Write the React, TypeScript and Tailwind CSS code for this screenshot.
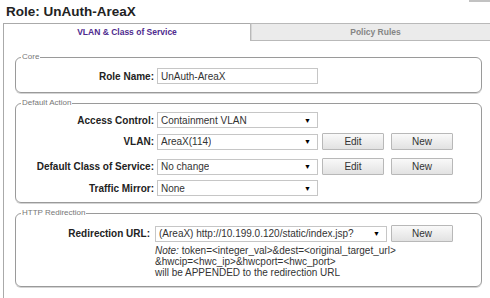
import type { ReactNode } from "react";

function Select({ value, width }: { value: string; width: string }) {
  return (
    <div
      className={`${width} flex h-[16px] items-center justify-between border border-[#c6c6c6] bg-white pl-[3px] pr-[6px] text-[10px] text-[#333]`}
    >
      <span className="truncate">{value}</span>
      <span className="text-[7px] leading-none text-black">▼</span>
    </div>
  );
}

function Button({ children }: { children: ReactNode }) {
  return (
    <button className="flex h-[17px] w-[62px] items-center justify-center rounded-[1px] border border-[#b8b8b8] bg-gradient-to-b from-[#f9f9f9] to-[#e2e2e2] text-[10px] text-[#333]">
      {children}
    </button>
  );
}

function Label({ children, width = "w-[138px]" }: { children: ReactNode; width?: string }) {
  return <div className={`${width} shrink-0 text-right text-[10px] font-bold text-[#222]`}>{children}</div>;
}

function Group({ title, className, children }: { title: string; className: string; children: ReactNode }) {
  return (
    <fieldset className={`w-[467px] rounded-[6px] border border-[#9a9a9a] shadow-[0_1px_0_#d4d4d4] ${className}`}>
      <legend className="ml-[5px] px-[1px] text-[8px] leading-[10px] text-[#777]">{title}</legend>
      {children}
    </fieldset>
  );
}

export default function App() {
  return (
    <div className="h-[298px] w-[490px] overflow-hidden bg-white font-['Liberation_Sans',Arial,sans-serif]">
      {/* Title */}
      <div className="flex h-[23px] items-start">
        <h1 className="pl-[6px] pt-[5px] text-[13.5px] font-bold leading-none text-[#222]">Role: UnAuth-AreaX</h1>
        <div className="ml-auto h-[2px] w-[21px] bg-[#c2c2c2]" />
      </div>

      <div className="ml-[3px] w-[498px]">
        {/* Tabs */}
        <div className="flex h-[18px]">
          <div className="flex w-[247px] items-center justify-center border-l border-t border-[#aaa] bg-white text-[8.5px] font-bold text-[#4e2a8e]">
            VLAN &amp; Class of Service
          </div>
          <div className="flex flex-1 items-center justify-center border border-[#b9b9b9] bg-[#ebebeb] text-[8.5px] font-bold text-[#858585] shadow-[inset_1px_0_0_#d6d6d6]">
            Policy Rules
          </div>
        </div>

        {/* Panel */}
        <div className="flex h-[260px] flex-col gap-[5px] border-l border-[#aaa] pl-[11px] pt-[11px]">
          <Group title="Core" className="pb-[8px] pt-[6px]">
            <div className="flex h-[16px] items-center gap-[3px]">
              <Label>Role Name:</Label>
              <div className="flex h-[16px] w-[161px] items-center border border-[#c6c6c6] pl-[3px] text-[10px] text-[#333]">
                UnAuth-AreaX
              </div>
            </div>
          </Group>

          <Group title="Default Action" className="pb-[6px] pt-[4px]">
            <div className="flex h-[16px] items-center gap-[3px]">
              <Label>Access Control:</Label>
              <Select value="Containment VLAN" width="w-[161px]" />
            </div>
            <div className="mt-[5px] flex h-[17px] items-center gap-[3px]">
              <Label>VLAN:</Label>
              <Select value="AreaX(114)" width="w-[161px]" />
              <div className="ml-[1px] flex gap-[7px]">
                <Button>Edit</Button>
                <Button>New</Button>
              </div>
            </div>
            <div className="mt-[8px] flex h-[17px] items-center gap-[3px]">
              <Label>Default Class of Service:</Label>
              <Select value="No change" width="w-[161px]" />
              <div className="ml-[1px] flex gap-[7px]">
                <Button>Edit</Button>
                <Button>New</Button>
              </div>
            </div>
            <div className="mt-[5px] flex h-[16px] items-center gap-[3px]">
              <Label>Traffic Mirror:</Label>
              <Select value="None" width="w-[161px]" />
            </div>
          </Group>

          <Group title="HTTP Redirection" className="pb-[8px] pt-[7px]">
            <div className="flex h-[17px] items-center gap-[5px]">
              <Label width="w-[134px]">Redirection URL:</Label>
              <Select value="(AreaX) http://10.199.0.120/static/index.jsp?" width="w-[232px]" />
              <div className="-ml-[1px]">
                <Button>New</Button>
              </div>
            </div>
            <p className="ml-[139px] mt-[3px] text-[10px] leading-[11px] text-[#333]">
              <i>Note:</i> token=&lt;integer_val&gt;&amp;dest=&lt;original_target_url&gt;
              <br />
              &amp;hwcip=&lt;hwc_ip&gt;&amp;hwcport=&lt;hwc_port&gt;
              <br />
              will be APPENDED to the redirection URL
            </p>
          </Group>
        </div>
      </div>
    </div>
  );
}
